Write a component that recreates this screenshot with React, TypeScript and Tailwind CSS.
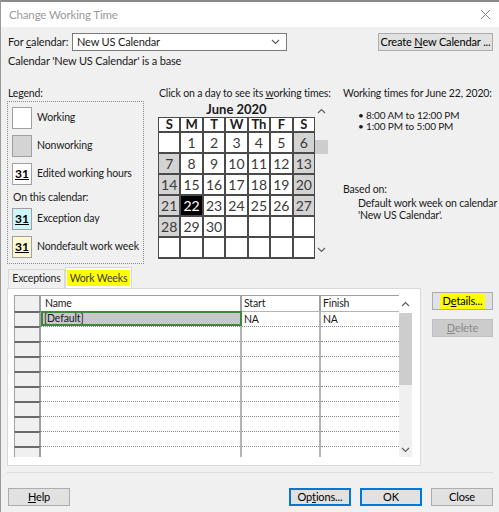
import React from 'react';

const font = { fontFamily: 'Lato, "Liberation Sans", sans-serif' };

const weeks: (number | null)[][] = [
  [null, 1, 2, 3, 4, 5, 6],
  [7, 8, 9, 10, 11, 12, 13],
  [14, 15, 16, 17, 18, 19, 20],
  [21, 22, 23, 24, 25, 26, 27],
  [28, 29, 30, null, null, null, null],
  [null, null, null, null, null, null, null],
];

const Chevron = ({ up }: { up?: boolean }) => (
  <svg width="9" height="6" viewBox="0 0 9 6" className="text-[#606060]">
    <path d={up ? 'M1 5 L4.5 1.5 L8 5' : 'M1 1 L4.5 4.5 L8 1'} fill="none" stroke="currentColor" strokeWidth="1.2" />
  </svg>
);

const Swatch = ({ bg, label }: { bg: string; label?: boolean }) => (
  <div className={`w-[20px] h-[22px] shrink-0 border border-[#a0a0a0] flex items-center justify-center ${bg}`}>
    {label && <span className="text-[12px] font-bold underline leading-none text-black tracking-normal">31</span>}
  </div>
);

const Btn = ({ children, className = '' }: { children: React.ReactNode; className?: string }) => (
  <div className={`h-[18px] border border-[#adadad] bg-[#e1e1e1] flex items-center justify-center text-black ${className}`}>
    <span className="leading-[14px]">{children}</span>
  </div>
);

// a cell in the work-weeks table: dotted top rule, solid right rule
const Cell = ({ w, last, first, children }: { w: string; last?: boolean; first?: boolean; children?: React.ReactNode }) => (
  <div className={`${w} flex flex-col ${last ? '' : 'border-r-2 border-[#b4b4b4]'}`}>
    <div className={`h-0 border-t ${first ? 'border-solid border-[#b4b4b4]' : 'border-dotted border-[#8a8a8a]'}`} />
    <div className="flex-1 flex items-center pl-[2px] leading-none">{children}</div>
  </div>
);

const App: React.FC = () => {
  const rows = Array.from({ length: 10 });
  return (
    <div className="w-[499px] h-[512px] bg-[#f0f0f0] overflow-hidden border-l border-[#9a9a9a] text-[10.5px] tracking-[-0.15px] text-[#1a1a1a] whitespace-nowrap" style={font}>
      {/* title bar */}
      <div className="h-[27px] bg-white border-t-2 border-[#8a8a8a] flex items-center justify-between pl-[8px] pr-[8px]">
        <span className="text-[#9a9a9a] text-[11.5px]">Change Working Time</span>
        <svg width="11" height="11" viewBox="0 0 11 11">
          <path d="M1 1 L10 10 M10 1 L1 10" stroke="#8a8a8a" strokeWidth="1" />
        </svg>
      </div>

      <div className="pl-[6px] pr-[6px]">
        {/* calendar chooser */}
        <div className="flex items-center mt-[6px] h-[18px] text-[11px]">
          <span className="w-[65px] pl-[1px]">For <u>c</u>alendar:</span>
          <div className="w-[215px] h-[18px] bg-white border border-[#7a7a7a] flex items-center justify-between pl-[4px] pr-[6px]">
            <span>New US Calendar</span>
            <Chevron />
          </div>
          <div className="flex-1" />
          <Btn className="w-[115px]">Create <u>N</u>ew Calendar ...</Btn>
        </div>
        <div className="mt-[2px] pl-[1px] leading-[16px] text-[11px]">Calendar 'New US Calendar' is a base</div>

        {/* legend / calendar / working times */}
        <div className="flex mt-[17px]">
          <div className="w-[137px] shrink-0">
            <div className="pl-[1px] leading-[14px]">Legend:</div>
            <div className="mt-[1px] h-[163px] border border-dotted border-[#8a8a8a] pl-[4px] pt-[5px] flex flex-col">
              <div className="flex items-center gap-[5px] h-[22px]">
                <Swatch bg="bg-white" />
                <span>Working</span>
              </div>
              <div className="flex items-center gap-[5px] h-[22px] mt-[6px]">
                <Swatch bg="bg-[#d4d4d4]" />
                <span>Nonworking</span>
              </div>
              <div className="flex items-center gap-[5px] h-[22px] mt-[6px]">
                <Swatch bg="bg-white" label />
                <span>Edited working hours</span>
              </div>
              <div className="mt-[4px] leading-[16px] pl-[1px]">On this calendar:</div>
              <div className="flex items-center gap-[5px] h-[22px] mt-[3px]">
                <Swatch bg="bg-[#ccf6fb]" label />
                <span>Exception day</span>
              </div>
              <div className="flex items-center gap-[5px] h-[22px] mt-[6px]">
                <Swatch bg="bg-[#fdfad0]" label />
                <span>Nondefault work week</span>
              </div>
            </div>
          </div>

          <div className="ml-[14px] w-[170px] shrink-0">
            <div className="leading-[14px] pl-[1px]">Click on a day to see its <u>w</u>orking times:</div>
            <div className="flex">
              <div className="w-[157px]">
                <div className="text-center font-bold text-[13px] tracking-normal leading-[16px] mt-[1px]">June 2020</div>
                <div className="grid grid-cols-7 gap-[2px] bg-[#4a4a4a] p-[1px] pb-[2px] tracking-normal">
                  {['S', 'M', 'T', 'W', 'Th', 'F', 'S'].map((d, i) => (
                    <div key={i} className="h-[13px] bg-white flex items-center justify-center font-bold text-[13px] leading-none text-[#202020]">
                      {d}
                    </div>
                  ))}
                  {weeks.flatMap((w, r) =>
                    w.map((d, c) => {
                      const weekend = d !== null && (c === 0 || c === 6);
                      const sel = d === 22;
                      const bg = sel ? 'bg-black text-white' : weekend ? 'bg-[#d3d3d3] text-[#3a3a3a]' : 'bg-white text-[#3a3a3a]';
                      return (
                        <div key={`${r}-${c}`} className={`h-[19px] flex items-center justify-center text-[14px] leading-none ${bg}`}>
                          {d ?? ''}
                        </div>
                      );
                    })
                  )}
                </div>
              </div>
              <div className="w-[13px] flex flex-col items-center pt-[8px]">
                <Chevron up />
                <div className="w-[13px] h-[14px] bg-[#cdcdcd] mt-[26px]" />
                <div className="flex-1" />
                <div className="mb-[6px]">
                  <Chevron />
                </div>
              </div>
            </div>
          </div>

          <div className="ml-[15px] flex-1">
            <div className="leading-[14px]">Working times for June 22, 2020:</div>
            <div className="pl-[15px] mt-[10px] leading-[11px] text-[10px]">
              <div>• 8:00 AM to 12:00 PM</div>
              <div>• 1:00 PM to 5:00 PM</div>
            </div>
            <div className="mt-[50px] leading-[14px]">Based on:</div>
            <div className="pl-[15px] leading-[12px] mt-[1px]">
              <div>Default work week on calendar</div>
              <div>'New US Calendar'.</div>
            </div>
          </div>
        </div>

        {/* tabs */}
        <div className="flex items-end mt-[3px] h-[21px] pl-[1px]">
          <div className="h-[19px] w-[57px] border border-b-0 border-[#d9d9d9] flex items-center justify-center text-[#222]">Exceptions</div>
          <div className="h-[21px] w-[67px] bg-white border border-b-0 border-[#d9d9d9] flex items-center justify-center">
            <span className="bg-[#ffff00] px-[3px] leading-[16px] text-[#3a3a3a]">Work Weeks</span>
          </div>
        </div>

        <div className="flex">
          <div className="w-[414px] h-[178px] bg-white border border-[#d9d9d9] pl-[6px] pt-[6px]">
            <div className="w-[398px] h-[162px] flex">
              <div className="flex-1 flex flex-col overflow-hidden">
                <div className="flex h-[18px] border-t border-[#a0a0a0]">
                  <div className="w-[27px] border-l border-r-2 border-[#a0a0a0] bg-[#f0f0f0]" />
                  <div className="w-[201px] border-r-2 border-[#a0a0a0] pl-[4px] flex items-end leading-[15px]">Name</div>
                  <div className="w-[79px] border-r-2 border-[#a0a0a0] pl-[2px] flex items-end leading-[15px]">Start</div>
                  <div className="flex-1 pl-[2px] flex items-end leading-[15px]">Finish</div>
                </div>
                {rows.map((_, i) => (
                  <div key={i} className="flex h-[15px] shrink-0">
                    <div className="w-[27px] border-l border-r-2 border-t-2 border-l-[#a0a0a0] border-r-[#a0a0a0] border-t-[#6a6a6a] bg-[#f0f0f0]" />
                    {i === 0 ? (
                      <div className="w-[201px] border-2 border-[#3a8a3a] bg-[#c8c8c8] pl-[1px] flex items-center leading-none">[Default]</div>
                    ) : (
                      <Cell w="w-[201px]" />
                    )}
                    <Cell w="w-[79px]" first={i === 0}>{i === 0 ? 'NA' : ''}</Cell>
                    <Cell w="flex-1" first={i === 0} last>{i === 0 ? 'NA' : ''}</Cell>
                  </div>
                ))}
              </div>
              <div className="w-[13px] bg-[#f0f0f0] flex flex-col items-center">
                <div className="h-[18px] flex items-center bg-white w-full justify-center">
                  <Chevron up />
                </div>
                <div className="w-full h-[72px] bg-[#cdcdcd]" />
                <div className="flex-1" />
                <div className="mb-[4px]">
                  <Chevron />
                </div>
              </div>
            </div>
          </div>

          <div className="ml-[11px] mt-[4px] flex flex-col gap-[9px] text-[11px]">
            <Btn className="w-[61px]">
              <span className="bg-[#ffff00] px-[3px] leading-[16px] inline-block">D<u>e</u>tails...</span>
            </Btn>
            <Btn className="w-[61px] !bg-[#cccccc] !border-[#bfbfbf] !text-[#8a8a8a]">
              <u>D</u>elete
            </Btn>
          </div>
        </div>

        <div className="mt-[6px] h-px bg-[#dcdcdc] w-[486px]" />

        {/* footer buttons */}
        <div className="flex items-center mt-[15px] pl-[1px] w-[486px] text-[11px]">
          <Btn className="w-[62px]">
            <u>H</u>elp
          </Btn>
          <div className="flex-1" />
          <Btn className="w-[62px] !border-[#0078d7] border-2">
            Op<u>t</u>ions...
          </Btn>
          <Btn className="w-[62px] ml-[9px] !border-[#0078d7] border-2">OK</Btn>
          <Btn className="w-[62px] ml-[9px]">Close</Btn>
        </div>
      </div>
    </div>
  );
};

export default App;
